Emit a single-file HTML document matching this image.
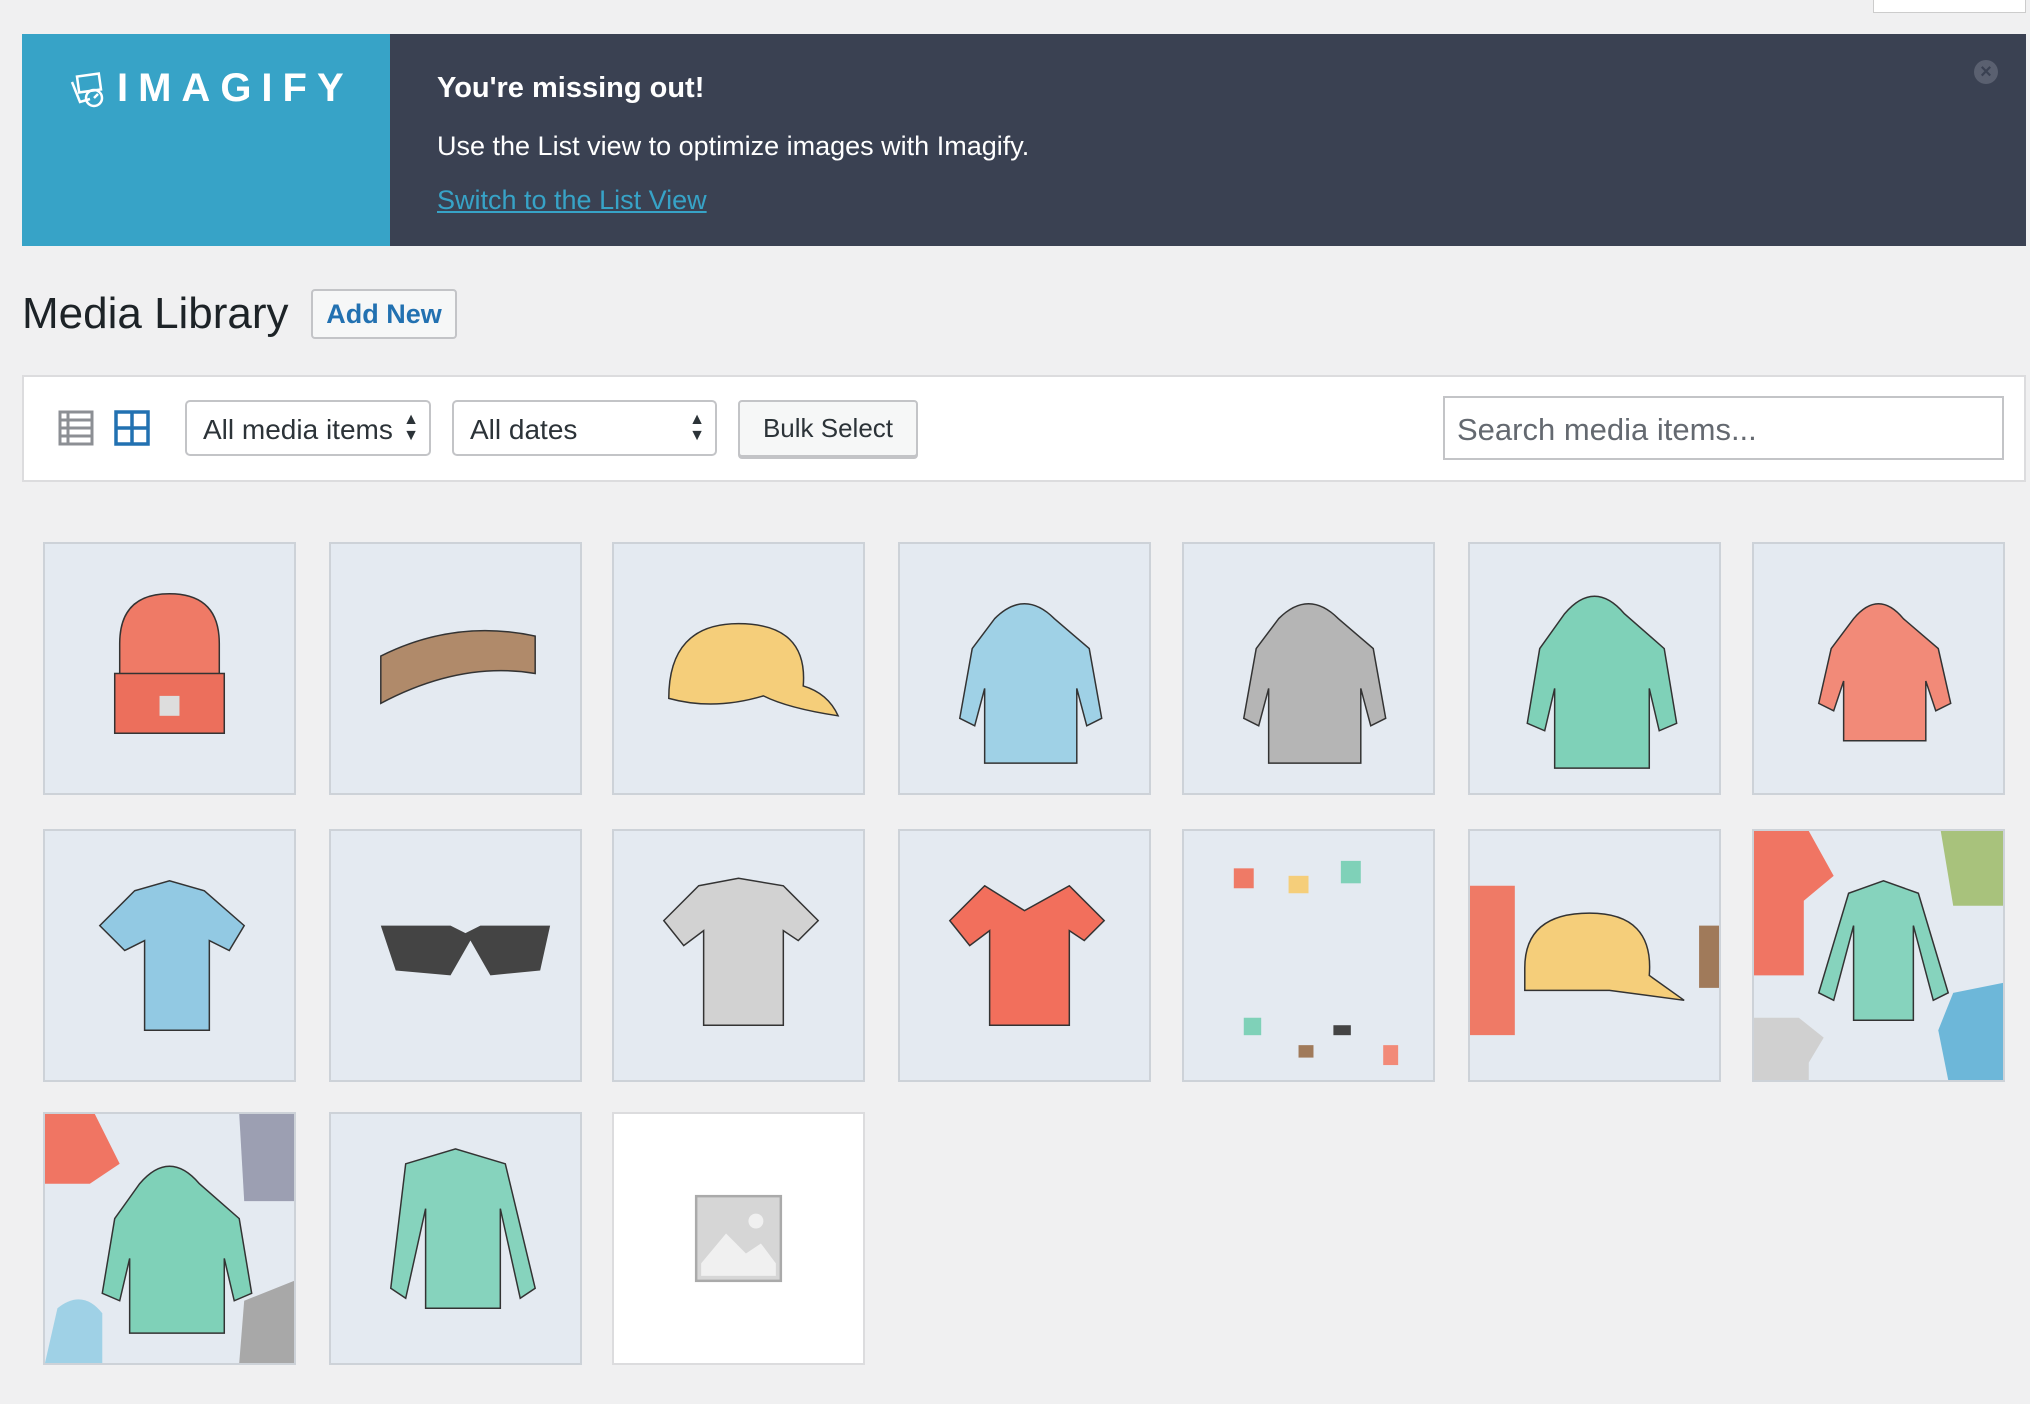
<!DOCTYPE html>
<html><head><meta charset="utf-8"><style>
*{box-sizing:border-box;margin:0;padding:0}
body{width:2030px;height:1404px;background:#f0f0f1;font-family:"Liberation Sans",sans-serif;position:relative;overflow:hidden;color:#1d2327}
.abs{position:absolute}
.banner{left:22px;top:34px;width:2004px;height:212px;background:#3a4152}
.blue{left:0;top:0;width:368px;height:212px;background:#37a3c7}
.logo{left:95px;top:32px;color:#fff;font-size:40px;letter-spacing:10px;font-weight:bold}
.tile{position:absolute;width:253px;height:253px;background:#e4eaf1;border:2px solid #cdd2d8;overflow:hidden}
.tile svg{width:100%;height:100%}
.sel{position:absolute;top:400px;height:56px;background:#fff;border:2px solid #c3c4c7;border-radius:5px;font-size:28px;padding:12px 16px;color:#2c3338}
</style></head><body>
<div class="abs" style="left:1873px;top:0;width:153px;height:13px;background:#fff;border:1px solid #ccc;border-top:none"></div>
<div class="abs banner">
 <div class="abs blue">
  <svg class="abs" style="left:46px;top:38px" width="48" height="36" viewBox="0 0 48 36"><g fill="none" stroke="#fff" stroke-width="2.5"><rect x="10" y="3" width="22" height="16" transform="rotate(-8 21 11)"/><path d="M4 10l8 20 10-3"/><circle cx="26" cy="26" r="8"/><path d="M26 26l4-4"/></g></svg>
  <div class="abs logo">IMAGIFY</div>
 </div>
 <div class="abs" style="left:415px;top:38px;color:#fff;font-size:29px;font-weight:bold">You're missing out!</div>
 <div class="abs" style="left:415px;top:97px;color:#fff;font-size:27px">Use the List view to optimize images with Imagify.</div>
 <div class="abs" style="left:415px;top:151px;color:#37a3c7;font-size:27px;text-decoration:underline">Switch to the List View</div>
 <div class="abs" style="left:1952px;top:26px;width:24px;height:24px;border-radius:50%;background:#5a6070;color:#3a4152;font-size:20px;line-height:24px;text-align:center;font-weight:bold">×</div>
</div>
<div class="abs" style="left:22px;top:289px;font-size:44px;color:#1d2327">Media Library</div>
<div class="abs" style="left:311px;top:289px;width:146px;height:50px;border:2px solid #c3c4c7;border-radius:4px;background:#f6f7f7;color:#2271b1;font-size:27px;font-weight:bold;text-align:center;line-height:46px">Add New</div>
<div class="abs" style="left:22px;top:375px;width:2004px;height:107px;background:#fff;border:2px solid #dcdcde"></div>
<svg class="abs" style="left:58px;top:410px" width="36" height="36" viewBox="0 0 36 36"><g fill="none" stroke="#8c8f94" stroke-width="3"><rect x="2" y="2" width="32" height="32"/><path d="M2 10h32M2 18h32M2 26h32M10 2v32"/></g></svg>
<svg class="abs" style="left:114px;top:410px" width="36" height="36" viewBox="0 0 36 36"><g fill="none" stroke="#2271b1" stroke-width="3.5"><rect x="2" y="2" width="32" height="32"/><path d="M18 2v32M2 18h32"/></g></svg>
<div class="sel" style="left:185px;width:246px">All media items<span style="position:absolute;right:10px;top:10px;font-size:16px;line-height:16px">▲<br>▼</span></div>
<div class="sel" style="left:452px;width:265px">All dates<span style="position:absolute;right:10px;top:10px;font-size:16px;line-height:16px">▲<br>▼</span></div>
<div class="abs" style="left:738px;top:400px;width:180px;height:57px;background:#f6f7f7;border:2px solid #c3c4c7;border-radius:4px;font-size:26px;text-align:center;line-height:53px;color:#2c3338;box-shadow:0 2px 0 #c3c4c7">Bulk Select</div>
<div class="abs" style="left:1443px;top:396px;width:561px;height:64px;border:2px solid #c3c4c7;background:#fff;font-size:31px;color:#646970;padding:14px 12px">Search media items...</div>

<div class="tile" style="left:43px;top:542px"><svg viewBox="0 0 100 100"><path d="M30 70V40q0-20 20-20t20 20v30z" fill="#ef7a66" stroke="#333" stroke-width=".6"/><rect x="28" y="52" width="44" height="24" fill="#ec6f5c" stroke="#333" stroke-width=".6"/><rect x="46" y="61" width="8" height="8" fill="#ddd"/></svg></div>
<div class="tile" style="left:329px;top:542px"><svg viewBox="0 0 100 100"><path d="M20 45q30-15 62-8l0 15q-30-5-62 12z" fill="#b08a6a" stroke="#333" stroke-width=".6"/></svg></div>
<div class="tile" style="left:612px;top:542px"><svg viewBox="0 0 100 100"><path d="M22 62q0-30 28-30t26 25q10 3 14 12q-20-3-30-8-20 6-38 1z" fill="#f5ce7a" stroke="#333" stroke-width=".6"/></svg></div>
<div class="tile" style="left:898px;top:542px"><svg viewBox="0 0 100 100"><path d="M38 30q12-12 24 0l14 12 5 28-6 3-4-15v30H34V58l-4 15-6-3 5-28z" fill="#9fd1e6" stroke="#333" stroke-width=".6"/></svg></div>
<div class="tile" style="left:1182px;top:542px"><svg viewBox="0 0 100 100"><path d="M38 30q12-12 24 0l14 12 5 28-6 3-4-15v30H34V58l-4 15-6-3 5-28z" fill="#b5b5b5" stroke="#333" stroke-width=".6"/></svg></div>
<div class="tile" style="left:1468px;top:542px"><svg viewBox="0 0 100 100"><path d="M38 28q12-14 24 0l16 14 5 30-7 3-4-17v32H34V58l-4 17-7-3 5-30z" fill="#7fd1b8" stroke="#333" stroke-width=".6"/></svg></div>
<div class="tile" style="left:1752px;top:542px"><svg viewBox="0 0 100 100"><path d="M40 30q10-12 20 0l14 12 5 22-6 3-4-12v24H36V55l-4 12-6-3 5-22z" fill="#f28a78" stroke="#333" stroke-width=".6"/></svg></div>

<div class="tile" style="left:43px;top:829px"><svg viewBox="0 0 100 100"><path d="M36 24l14-4 14 4 16 14-6 10-8-4v36H40V44l-8 4-10-10z" fill="#92c9e3" stroke="#333" stroke-width=".6"/></svg></div>
<div class="tile" style="left:329px;top:829px"><svg viewBox="0 0 100 100"><path d="M20 38h28l6 3 6-3h28l-4 18-20 2-8-14-8 14-22-2z" fill="#444"/></svg></div>
<div class="tile" style="left:612px;top:829px"><svg viewBox="0 0 100 100"><path d="M34 22l16-3 18 3 14 14-8 8-6-4v38H36V40l-8 6-8-10z" fill="#d2d2d2" stroke="#333" stroke-width=".6"/></svg></div>
<div class="tile" style="left:898px;top:829px"><svg viewBox="0 0 100 100"><path d="M34 22l16 10 18-10 14 14-8 8-6-4v38H36V40l-8 6-8-10z" fill="#f26f5c" stroke="#333" stroke-width=".6"/></svg></div>
<div class="tile" style="left:1182px;top:829px"><svg viewBox="0 0 100 100"><rect x="20" y="15" width="8" height="8" fill="#ef7a66"/><rect x="42" y="18" width="8" height="7" fill="#f5ce7a"/><rect x="63" y="12" width="8" height="9" fill="#7fd1b8"/><rect x="24" y="75" width="7" height="7" fill="#7fd1b8"/><rect x="60" y="78" width="7" height="4" fill="#444"/><rect x="46" y="86" width="6" height="5" fill="#a07a5a"/><rect x="80" y="86" width="6" height="8" fill="#f28a78"/></svg></div>
<div class="tile" style="left:1468px;top:829px"><svg viewBox="0 0 100 100"><path d="M0 22h18v60H0z" fill="#ef7a66"/><path d="M22 55q0-22 26-22t24 25l14 10-30-4-34 0z" fill="#f5ce7a" stroke="#333" stroke-width=".6"/><path d="M92 38h8v25h-8z" fill="#a07a5a"/></svg></div>
<div class="tile" style="left:1752px;top:829px"><svg viewBox="0 0 100 100"><path d="M0 0h22l10 18-12 10v30H0z" fill="#f07563"/><path d="M75 0h25v30H80z" fill="#a8c27c"/><path d="M38 25l14-5 14 5 12 40-6 3-8-30v38H40V38l-8 30-6-3z" fill="#86d3bd" stroke="#333" stroke-width=".6"/><path d="M0 75h18l10 8-6 10v7H0z" fill="#d0d0d0"/><path d="M80 65l20-4v39H78l-4-20z" fill="#6db7d9"/></svg></div>

<div class="tile" style="left:43px;top:1112px"><svg viewBox="0 0 100 100"><path d="M0 0h20l10 20-12 8H0z" fill="#f07563"/><path d="M78 0h22v35H80z" fill="#9c9fb2"/><path d="M38 28q12-14 24 0l16 14 5 30-7 3-4-17v30H34V58l-4 17-7-3 5-30z" fill="#7fd1b8" stroke="#333" stroke-width=".6"/><path d="M5 78q10-8 18 2v20H0z" fill="#9fd1e6"/><path d="M80 75l20-8v33H78z" fill="#a8a8a8"/></svg></div>
<div class="tile" style="left:329px;top:1112px"><svg viewBox="0 0 100 100"><path d="M30 20l20-6 20 6 12 50-6 4-8-36v40H38V38l-8 36-6-4z" fill="#86d3bd" stroke="#333" stroke-width=".6"/></svg></div>
<div class="tile" style="left:612px;top:1112px;background:#fff;border-color:#dcdcde"><svg viewBox="0 0 100 100"><rect x="33" y="33" width="34" height="34" fill="#d6d6d6" stroke="#aaa" stroke-width="1"/><path d="M35 60l10-12 8 8 6-4 6 8v5H35z" fill="#f0f0f0"/><circle cx="57" cy="43" r="3" fill="#f0f0f0"/></svg></div>
</body></html>
